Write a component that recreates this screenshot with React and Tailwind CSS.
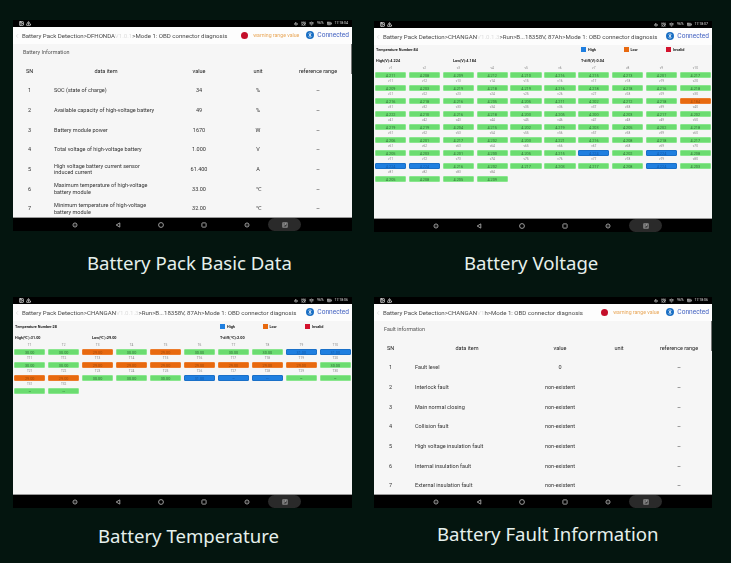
import React from "react";
import { Bluetooth, ChevronLeft, Wifi, BatteryFull, AlarmClock, Vibrate, Image, TriangleAlert } from "lucide-react";

const BASIC_ROWS = [
    ["SOC (state of charge)", "34", "%"],
    ["Available capacity of high-voltage battery", "49", "%"],
    ["Battery module power", "1670", "W"],
    ["Total voltage of high-voltage battery", "1.000", "V"],
    ["High voltage battery current sensor induced current", "61.400", "A"],
    ["Maximum temperature of high-voltage battery module", "33.00", "℃"],
    ["Minimum temperature of high-voltage battery module", "32.00", "℃"],
];

const FAULT_ROWS = [
    ["Fault level", "0", ""],
    ["Interlock fault", "non-existent", ""],
    ["Main normal closing", "non-existent", ""],
    ["Collision fault", "non-existent", ""],
    ["High voltage insulation fault", "non-existent", ""],
    ["Internal insulation fault", "non-existent", ""],
    ["External insulation fault", "non-existent", ""],
];

const VOLTAGES = [
    "4.211", "4.208", "4.209", "4.212", "4.210", "4.216", "4.215", "4.213", "4.201", "4.217",
    "4.209", "4.203", "4.219", "4.218", "4.219", "4.216", "4.218", "4.218", "4.216", "4.218",
    "4.216", "4.218", "4.216", "4.205", "4.205", "4.211", "4.202", "4.212", "4.218", "4.184",
    "4.222", "4.210", "4.216", "4.218", "4.203", "4.205", "4.200", "4.203", "4.217", "4.202",
    "4.219", "4.219", "4.204", "4.215", "4.202", "4.219", "4.203", "4.205", "4.202", "4.218",
    "4.206", "4.201", "4.217", "4.202", "4.203", "4.221", "4.216", "4.208", "4.218", "4.217",
    "4.205", "4.203", "4.201", "4.200", "4.205", "4.215", "4.224", "4.202", "4.224", "4.208",
    "4.224", "4.224", "4.216", "4.202", "4.217", "4.203", "4.217", "4.208", "4.224", "4.203",
    "4.205", "4.208", "4.205", "4.209",
];
const VOLTAGE_COLORS = { 29: "o", 66: "b", 68: "b", 70: "b", 71: "b", 78: "b" };

const TEMPS = "gg" + "ogogggbb" + "gg" + "ooooooog" + "oo" + "gggbbbgg" + "gg";

const BAR = {
    g: "bg-[#6bdc70] border-[#8ae68e] text-[#2f6e35]",
    o: "bg-[#e8690f] border-[#ec7c2c] text-[#a04a0a]",
    b: "bg-[#1f7fe0] border-[#1a70c8] text-[#1259a8]",
};
const TEMP_VALUE = { g: "30.00", o: "29.00", b: "31.00" };

const NavIcon = ({ kind }) => (
    <svg width="6" height="6" viewBox="0 0 10 10" fill="none" stroke="#a3a3a3" strokeWidth="1.6">
        {kind === "dot" && <><circle cx="5" cy="5" r="3.4" /><circle cx="5" cy="5" r="1" fill="#a3a3a3" stroke="none" /></>}
        {kind === "back" && <path d="M8 1.5v7L2 5z" />}
        {kind === "home" && <circle cx="5" cy="5" r="4" />}
        {kind === "recent" && <rect x="1.5" y="1.5" width="7" height="7" rx="1" />}
        {kind === "shot" && <><rect x="1.5" y="1.5" width="7" height="7" /><path d="M1.5 5h4V1.5" /></>}
    </svg>
);

const NavBar = () => (
    <div className="h-[13px] bg-black grid grid-cols-[43px_43px_43px_43px_43px_33px] pl-[40px] items-center justify-items-center">
        <NavIcon kind="dot" />
        <NavIcon kind="back" />
        <NavIcon kind="home" />
        <NavIcon kind="recent" />
        <NavIcon kind="dot" />
        <div className="w-[33px] h-[13px] rounded-full bg-[#2a2a2a] flex items-center justify-center">
            <NavIcon kind="shot" />
        </div>
    </div>
);

const StatusBar = ({ time }) => (
    <div className="h-[7px] bg-black flex items-center justify-between pl-[6px] pr-[4px] text-white">
        <div className="flex items-center gap-[2px]">
            <Image size={5} strokeWidth={3} />
            <TriangleAlert size={5} strokeWidth={3} />
        </div>
        <div className="flex items-center gap-[3px] text-[3.5px] text-[#ddd]">
            <Vibrate size={4} strokeWidth={3} />
            <AlarmClock size={5} strokeWidth={3} />
            <Wifi size={5} strokeWidth={3} />
            <span>96%</span>
            <BatteryFull size={5} strokeWidth={3} />
            <span>{time}</span>
        </div>
    </div>
);

const Connected = () => (
    <div className="flex items-center gap-[3px] shrink-0">
        <span className="w-[8px] h-[8px] rounded-full bg-[#1a6fc4] flex items-center justify-center text-white">
            <Bluetooth size={6} strokeWidth={2.5} />
        </span>
        <span className="text-[6.6px] text-[#3f5fc0]">Connected</span>
    </div>
);

const Warning = () => (
    <div className="flex items-center shrink-0">
        <span className="w-[7px] h-[7px] rounded-full bg-[#c40f2a]" />
        <span className="text-[5.2px] text-[#e9a85a] ml-[5px]">warning range value</span>
    </div>
);

const Header = ({ vehicle, hidden, path, warning }) => (
    <div className="h-[17px] bg-[#fdfdfd] flex items-center pl-[1px] pr-[3px] text-[#4a4a4a]">
        <ChevronLeft size={6} className="text-[#ccc] shrink-0" />
        <div className="text-[6.1px] pl-[2px] whitespace-nowrap flex-1 min-w-0">
            Battery Pack Detection&gt;{vehicle}
            <span className="text-[#dedede]">{hidden}</span>
            {path}
        </div>
        {warning && <Warning />}
        <div className={warning ? "ml-[7px]" : ""}>
            <Connected />
        </div>
    </div>
);

const TABLE_COLS = "grid grid-cols-[33px_120px_66px_52px_68px] items-center justify-items-center";

const DataTable = ({ title, rows }) => (
    <div className="relative h-[174px] bg-[#f6f6f6] border-b border-[#999] overflow-hidden text-[5.5px] leading-[6.5px] text-[#333]">
        <div className="h-[17px] flex items-center pl-[10px] text-[5.4px] text-[#555]">{title}</div>
        <div className={`${TABLE_COLS} h-[19.7px] text-[#222]`}>
            <span>SN</span>
            <span>data item</span>
            <span>value</span>
            <span>unit</span>
            <span>reference range</span>
        </div>
        {rows.map(([item, value, unit], i) => (
            <div key={item} className={`${TABLE_COLS} h-[19.7px]`}>
                <span>{i + 1}</span>
                <span className="justify-self-start pl-[8px] w-[111px]">{item}</span>
                <span>{value}</span>
                <span>{unit}</span>
                <span>--</span>
            </div>
        ))}
        <div className="absolute right-0 top-0 w-[1px] h-[30px] bg-[#777]" />
    </div>
);

const LegendItem = ({ color, label }) => (
    <div className="w-[42.5px] flex items-center gap-[2px]">
        <span className={`w-[5px] h-[5px] ${color}`} />
        <span>{label}</span>
    </div>
);

const CellGrid = ({ title, high, low, diff, cells, extraTop }) => (
    <div className={`h-[174px] bg-[#f6f6f6] border-b border-[#999] overflow-hidden text-[3.8px] text-[#222] ${extraTop}`}>
        <div className="h-[9px] flex items-center font-bold">
            <div className="w-[207px] pl-[2px]">{title}</div>
            <LegendItem color="bg-[#1f7fe0]" label="High" />
            <LegendItem color="bg-[#e8690f]" label="Low" />
            <LegendItem color="bg-[#d3122d]" label="Invalid" />
        </div>
        <div className="h-[9px] mt-[2px] flex items-center font-bold pl-[2px]">
            <div className="w-[77px]">{high}</div>
            <div className="w-[128px]">{low}</div>
            <div>{diff}</div>
        </div>
        <div className="grid grid-cols-10 gap-x-[2.6px] px-[1px]">
            {cells.map(({ label, value, color }) => (
                <div key={label} className="h-[13px] flex flex-col items-stretch text-center">
                    <div className="h-[7px] leading-[7px] text-[3.2px] text-[#888]">{label}</div>
                    <div className={`h-[6px] leading-[5px] border-[0.5px] rounded-[1px] ${BAR[color]}`}>{value}</div>
                </div>
            ))}
        </div>
    </div>
);

const Tablet = ({ status, caption, captionClass, children }) => (
    <div className="flex flex-col">
        <div className="blur-[0.4px] font-['Roboto',sans-serif]">
            <StatusBar time={status} />
            {children}
            <NavBar />
        </div>
        <div className={`h-[31px] flex items-center whitespace-nowrap text-[18.6px] text-[#e6f0ec] font-['Noto_Sans',sans-serif] ${captionClass}`}>
            {caption}
        </div>
    </div>
);

const voltageCells = VOLTAGES.map((value, i) => ({
    label: `v${i + 1}`,
    value,
    color: VOLTAGE_COLORS[i] || "g",
}));

const tempCells = TEMPS.split("").map((color, i) => ({
    label: `T${i + 1}`,
    value: i >= 26 ? "--" : TEMP_VALUE[color],
    color,
}));

const App = () => (
    <div className="w-[731px] h-[563px] overflow-hidden bg-[#04150f] grid grid-cols-[339px_338px] grid-rows-[277px_1fr] gap-x-[22px] pl-[13px] pt-[20px]">
        <Tablet status="17:18:04" caption="Battery Pack Basic Data" captionClass="pl-[74px] mt-[16px]">
            <Header vehicle="DFHONDA" hidden="V1.0.1" path=">Mode 1: OBD connector diagnosis" warning />
            <DataTable title="Battery Information" rows={BASIC_ROWS} />
        </Tablet>
        <div className="pt-[1px]">
            <Tablet status="17:18:07" caption="Battery Voltage" captionClass="pl-[90px] mt-[15px]">
                <Header vehicle="CHANGAN" hidden="V1.0.1.3" path=">Run>B...18358V, 87Ah>Mode 1: OBD connector diagnosis" />
                <CellGrid
                    title="Temperature Number:84"
                    high="High(V):4.224"
                    low="Low(V):4.184"
                    diff="T-diff(V):0.04"
                    cells={voltageCells}
                    extraTop=""
                />
            </Tablet>
        </div>
        <Tablet status="17:18:06" caption="Battery Temperature" captionClass="pl-[85px] mt-[12px]">
            <Header vehicle="CHANGAN" hidden="V1.0.1.3" path=">Run>B...18358V, 87Ah>Mode 1: OBD connector diagnosis" />
            <CellGrid
                title="Temperature Number:28"
                high="High(℃):31.00"
                low="Low(℃):29.00"
                diff="T-diff(℃):2.00"
                cells={tempCells}
                extraTop="pt-[1px]"
            />
        </Tablet>
        <Tablet status="17:18:06" caption="Battery Fault Information" captionClass="pl-[63px] mt-[10px]">
            <Header vehicle="CHANGAN" hidden="V1" path="h>Mode 1: OBD connector diagnosis" warning />
            <DataTable title="Fault information" rows={FAULT_ROWS} />
        </Tablet>
    </div>
);

export default App;
